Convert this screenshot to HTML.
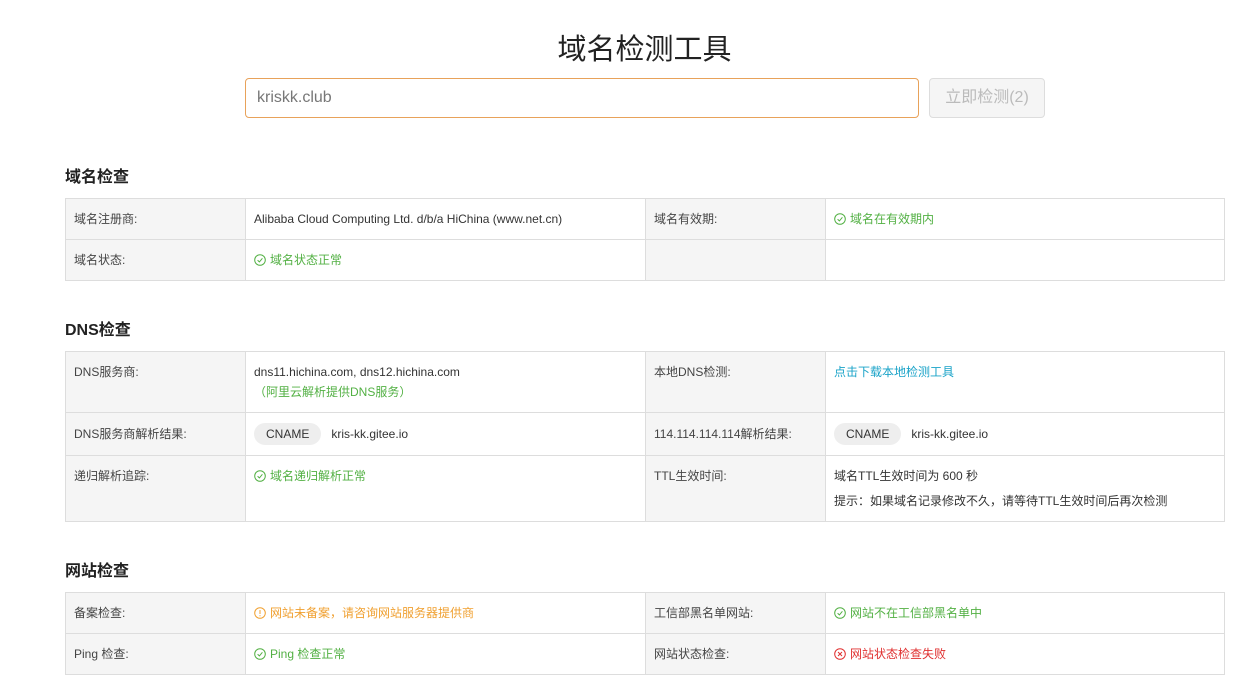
<!DOCTYPE html>
<html><head><meta charset="utf-8"><style>
*{margin:0;padding:0;box-sizing:border-box}
body{width:1247px;height:693px;background:#fff;font-family:"Liberation Sans","Noto Sans CJK SC",sans-serif;color:#333;position:relative;overflow:hidden}
.t{position:absolute;left:21px;width:1247px;top:30px;text-align:center;font-size:29px;color:#222;line-height:40px}
.inp{position:absolute;left:245px;top:78px;width:674px;height:40px;border:1px solid #e8a25a;border-radius:4px;font-size:16px;color:#777;padding:10px 11px}
.btn{position:absolute;left:929px;top:78px;width:116px;height:40px;border:1px solid #ddd;border-radius:4px;background:#f5f5f5;color:#bbb;font-size:16px;text-align:center;line-height:38px}
h3{position:absolute;left:65px;font-size:16px;font-weight:bold;color:#222}
table{position:absolute;left:65px;width:1159px;border-collapse:collapse;font-size:12px;table-layout:fixed}
td{border:1px solid #ddd;vertical-align:top;padding:13px 8px 0;line-height:14px}
td.l{background:#f5f5f5;color:#444}
.g{color:#52b043}.o{color:#f0a030}.r{color:#e03030}.b{color:#1aa3c8}
svg.ic{width:12px;height:12px;margin-right:4px;vertical-align:-2px}
.tag{display:inline-block;background:#eee;border-radius:11px;padding:4px 12px;margin-right:10px;font-size:12px;color:#333}
</style></head><body>
<svg width="0" height="0" style="position:absolute"><defs>
<symbol id="ok" viewBox="0 0 12 12"><circle cx="6" cy="6" r="5.3" fill="none" stroke="currentColor" stroke-width="1"/><path d="M3.6 6.2 L5.4 7.9 L8.4 4.3" fill="none" stroke="currentColor" stroke-width="1"/></symbol>
<symbol id="warn" viewBox="0 0 12 12"><circle cx="6" cy="6" r="5.3" fill="none" stroke="currentColor" stroke-width="1"/><path d="M6 3v4M6 8.2v1" fill="none" stroke="currentColor" stroke-width="1"/></symbol>
<symbol id="err" viewBox="0 0 12 12"><circle cx="6" cy="6" r="5.3" fill="none" stroke="currentColor" stroke-width="1"/><path d="M4 4L8 8M8 4L4 8" fill="none" stroke="currentColor" stroke-width="1"/></symbol>
</defs></svg>
<div class="t">域名检测工具</div>
<div class="inp">kriskk.club</div>
<div class="btn">立即检测(2)</div>

<h3 style="top:163px">域名检查</h3>
<table style="top:198px">
<colgroup><col style="width:180px"><col style="width:400px"><col style="width:180px"><col style="width:399px"></colgroup>
<tr style="height:41px"><td class="l">域名注册商:</td><td>Alibaba Cloud Computing Ltd. d/b/a HiChina (www.net.cn)</td><td class="l">域名有效期:</td><td class="g"><svg class="ic"><use href="#ok"/></svg>域名在有效期内</td></tr>
<tr style="height:41px"><td class="l">域名状态:</td><td class="g"><svg class="ic"><use href="#ok"/></svg>域名状态正常</td><td class="l"></td><td></td></tr>
</table>

<h3 style="top:316px">DNS检查</h3>
<table style="top:351px">
<colgroup><col style="width:180px"><col style="width:400px"><col style="width:180px"><col style="width:399px"></colgroup>
<tr style="height:61px"><td class="l">DNS服务商:</td><td>dns11.hichina.com, dns12.hichina.com<br><span class="g" style="line-height:26px">（阿里云解析提供DNS服务）</span></td><td class="l">本地DNS检测:</td><td class="b">点击下载本地检测工具</td></tr>
<tr style="height:43px"><td class="l" style="padding-top:14px">DNS服务商解析结果:</td><td style="padding-top:10px"><span class="tag">CNAME</span>kris-kk.gitee.io</td><td class="l" style="padding-top:14px">114.114.114.114解析结果:</td><td style="padding-top:10px"><span class="tag">CNAME</span>kris-kk.gitee.io</td></tr>
<tr style="height:66px"><td class="l">递归解析追踪:</td><td class="g"><svg class="ic"><use href="#ok"/></svg>域名递归解析正常</td><td class="l">TTL生效时间:</td><td>域名TTL生效时间为 600 秒<br><span style="line-height:36px">提示：如果域名记录修改不久，请等待TTL生效时间后再次检测</span></td></tr>
</table>

<h3 style="top:557px">网站检查</h3>
<table style="top:592px">
<colgroup><col style="width:180px"><col style="width:400px"><col style="width:180px"><col style="width:399px"></colgroup>
<tr style="height:41px"><td class="l">备案检查:</td><td class="o"><svg class="ic"><use href="#warn"/></svg>网站未备案，请咨询网站服务器提供商</td><td class="l">工信部黑名单网站:</td><td class="g"><svg class="ic"><use href="#ok"/></svg>网站不在工信部黑名单中</td></tr>
<tr style="height:41px"><td class="l">Ping 检查:</td><td class="g"><svg class="ic"><use href="#ok"/></svg>Ping 检查正常</td><td class="l">网站状态检查:</td><td class="r"><svg class="ic"><use href="#err"/></svg>网站状态检查失败</td></tr>
</table>
</body></html>
